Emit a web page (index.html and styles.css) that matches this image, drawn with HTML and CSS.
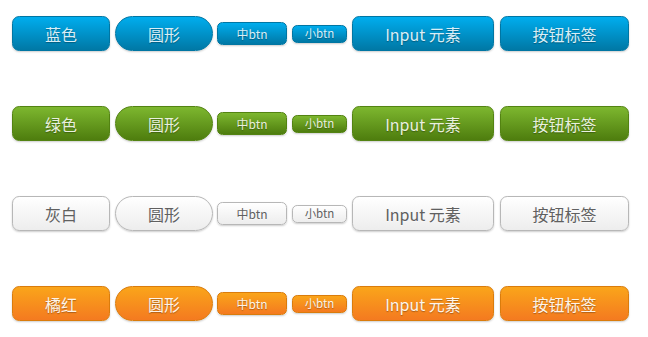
FILE: index.html
```html
<!DOCTYPE html>
<html lang="zh-CN">

<head>
  <meta charset="UTF-8">
  <title>CSS3 按钮</title>
  <link rel="stylesheet" href="styles.css">
</head>

<body>

  <div class="rows">
    <div class="row">
      <a href="#" class="button blue">蓝色</a>
      <a href="#" class="button blue bigrounded">圆形</a>
      <a href="#" class="button blue medium">中btn</a>
      <a href="#" class="button blue small">小btn</a>
      <input type="button" class="button blue input-btn" value="Input 元素">
      <button class="button blue tag-btn">按钮标签</button>
    </div>

    <div class="row">
      <a href="#" class="button green">绿色</a>
      <a href="#" class="button green bigrounded">圆形</a>
      <a href="#" class="button green medium">中btn</a>
      <a href="#" class="button green small">小btn</a>
      <input type="button" class="button green input-btn" value="Input 元素">
      <button class="button green tag-btn">按钮标签</button>
    </div>

    <div class="row">
      <a href="#" class="button white">灰白</a>
      <a href="#" class="button white bigrounded">圆形</a>
      <a href="#" class="button white medium">中btn</a>
      <a href="#" class="button white small">小btn</a>
      <input type="button" class="button white input-btn" value="Input 元素">
      <button class="button white tag-btn">按钮标签</button>
    </div>

    <div class="row">
      <a href="#" class="button orange">橘红</a>
      <a href="#" class="button orange bigrounded">圆形</a>
      <a href="#" class="button orange medium">中btn</a>
      <a href="#" class="button orange small">小btn</a>
      <input type="button" class="button orange input-btn" value="Input 元素">
      <button class="button orange tag-btn">按钮标签</button>
    </div>
  </div>

</body>

</html>
```

FILE: styles.css
```css
* {
  box-sizing: border-box;
}

body {
  margin: 0;
  padding: 16px 12px;
  background: #ffffff;
  font-family: "Noto Sans CJK SC", "Microsoft YaHei", sans-serif;
}

.rows {
  display: flex;
  flex-direction: column;
  gap: 55px;
}

.row {
  display: flex;
  align-items: center;
  gap: 5px;
}

/* base button */
.button {
  display: inline-block;
  margin: 0;
  outline: none;
  cursor: pointer;
  text-align: center;
  text-decoration: none;
  font-family: "Noto Sans CJK SC", "Microsoft YaHei", sans-serif;
  font-size: 16px;
  line-height: 100%;
  width: 98px;
  height: 35px;
  padding: 0;
  text-shadow: 0 1px 1px rgba(0, 0, 0, 0.3);
  border-radius: 0.45em;
  box-shadow: 0 1px 2px rgba(0, 0, 0, 0.2);
}

a.button {
  display: inline-flex;
  align-items: center;
  justify-content: center;
}

.bigrounded {
  border-radius: 2em;
}

.medium {
  font-size: 12px;
  width: 70px;
  height: 23px;
  margin-left: -1px;
}

.small {
  font-size: 11.5px;
  width: 55px;
  height: 18px;
}

.input-btn {
  width: 142px;
}

.tag-btn {
  width: 129px;
  margin-left: 1px;
}

/* colours */
.blue {
  color: #d9eef7;
  border: 1px solid #0076a3;
  background: linear-gradient(to bottom, #00adee, #0078a5);
}

.green {
  color: #e8f0de;
  border: 1px solid #538312;
  background: linear-gradient(to bottom, #7db72f, #4e7d0e);
}

.white {
  color: #606060;
  border: 1px solid #b7b7b7;
  background: linear-gradient(to bottom, #ffffff, #ededed);
  text-shadow: 0 1px 1px rgba(255, 255, 255, 0.6);
}

.orange {
  color: #fef4e9;
  border: 1px solid #da7c0c;
  background: linear-gradient(to bottom, #faa51a, #f47a20);
}
```
